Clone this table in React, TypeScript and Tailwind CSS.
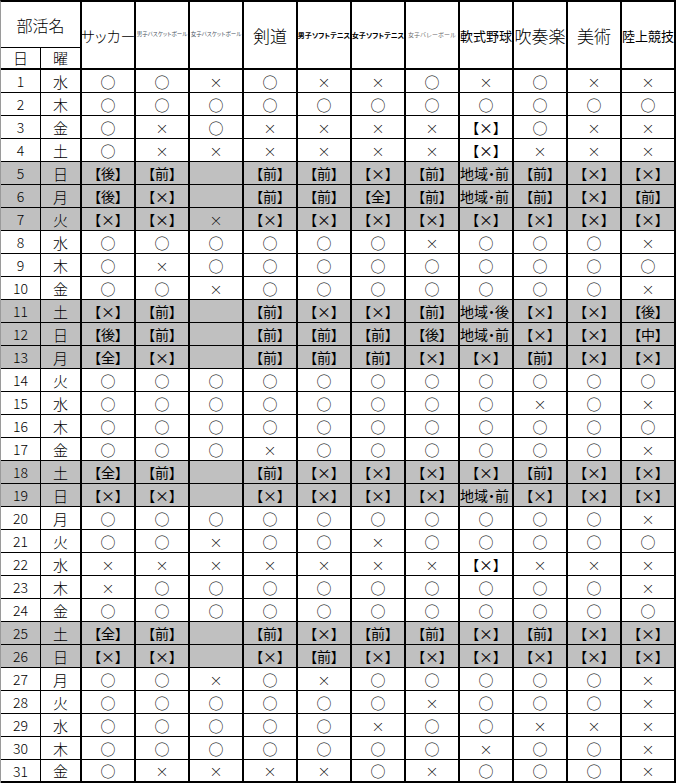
// 部活動 予定表 (月間)

const CLUBS = [
  { label: "サッカー", cls: "text-[15px] font-light [font-feature-settings:'palt']" },
  { label: "男子バスケットボール", cls: "text-[5.5px] text-[#4b5563] [font-feature-settings:'palt']" },
  { label: "女子バスケットボール", cls: "text-[5.5px] text-[#4b5563] [font-feature-settings:'palt']" },
  { label: "剣道", cls: "text-[17px] font-light" },
  { label: "男子ソフトテニス", cls: "text-[7px] font-bold [font-feature-settings:'palt']" },
  { label: "女子ソフトテニス", cls: "text-[7px] font-bold [font-feature-settings:'palt']" },
  { label: "女子バレーボール", cls: "text-[6px] text-[#6b6b6b]" },
  { label: "軟式野球", cls: "text-[13px]" },
  { label: "吹奏楽", cls: "text-[17px] font-light" },
  { label: "美術", cls: "text-[17px] font-light" },
  { label: "陸上競技", cls: "text-[13px]" },
];

// o = ○, x = ×, X = 【×】, 前/後/全/中 = 【前】 etc, _ = 空欄, 地前/地後 = 地域・前/後
const ROWS: [number, string, boolean, string[]][] = [
  [1, "水", false, ["o", "o", "x", "o", "x", "x", "o", "x", "o", "x", "x"]],
  [2, "木", false, ["o", "o", "o", "o", "o", "o", "o", "o", "o", "o", "o"]],
  [3, "金", false, ["o", "x", "o", "x", "x", "x", "x", "X", "o", "x", "x"]],
  [4, "土", false, ["o", "x", "x", "x", "x", "x", "x", "X", "x", "x", "x"]],
  [5, "日", true, ["後", "前", "_", "前", "前", "X", "前", "地前", "前", "X", "X"]],
  [6, "月", true, ["後", "X", "_", "前", "前", "全", "前", "地前", "前", "X", "前"]],
  [7, "火", true, ["X", "X", "x", "X", "X", "X", "X", "X", "X", "X", "X"]],
  [8, "水", false, ["o", "o", "o", "o", "o", "o", "x", "o", "o", "o", "x"]],
  [9, "木", false, ["o", "x", "o", "o", "o", "o", "o", "o", "o", "o", "o"]],
  [10, "金", false, ["o", "o", "x", "o", "o", "o", "o", "o", "o", "o", "x"]],
  [11, "土", true, ["X", "前", "_", "前", "X", "X", "前", "地後", "X", "X", "後"]],
  [12, "日", true, ["後", "前", "_", "前", "前", "前", "後", "地前", "X", "X", "中"]],
  [13, "月", true, ["全", "X", "_", "前", "前", "前", "X", "X", "前", "X", "X"]],
  [14, "火", false, ["o", "o", "o", "o", "o", "o", "o", "o", "o", "o", "o"]],
  [15, "水", false, ["o", "o", "o", "o", "o", "o", "o", "o", "x", "o", "x"]],
  [16, "木", false, ["o", "o", "o", "o", "o", "o", "o", "o", "o", "o", "o"]],
  [17, "金", false, ["o", "o", "o", "x", "o", "o", "o", "o", "o", "o", "x"]],
  [18, "土", true, ["全", "前", "_", "前", "X", "X", "X", "X", "前", "X", "X"]],
  [19, "日", true, ["X", "X", "_", "X", "X", "X", "X", "地前", "X", "X", "X"]],
  [20, "月", false, ["o", "o", "o", "o", "o", "o", "o", "o", "o", "o", "x"]],
  [21, "火", false, ["o", "o", "x", "o", "o", "x", "o", "o", "o", "o", "o"]],
  [22, "水", false, ["x", "x", "x", "x", "x", "x", "x", "X", "x", "x", "x"]],
  [23, "木", false, ["x", "o", "o", "o", "o", "o", "o", "o", "o", "o", "x"]],
  [24, "金", false, ["o", "o", "o", "o", "o", "o", "o", "o", "o", "o", "o"]],
  [25, "土", true, ["全", "前", "_", "前", "X", "前", "前", "X", "前", "X", "X"]],
  [26, "日", true, ["X", "X", "_", "X", "前", "X", "X", "X", "X", "X", "X"]],
  [27, "月", false, ["o", "o", "x", "o", "x", "o", "o", "o", "o", "o", "x"]],
  [28, "火", false, ["o", "o", "o", "o", "o", "o", "x", "o", "o", "o", "x"]],
  [29, "水", false, ["o", "o", "o", "o", "o", "x", "o", "o", "x", "x", "x"]],
  [30, "木", false, ["o", "o", "o", "o", "o", "o", "o", "x", "o", "o", "x"]],
  [31, "金", false, ["o", "x", "x", "x", "x", "o", "x", "o", "o", "o", "x"]],
];

function cellText(v: string) {
  if (v === "o") return "○";
  if (v === "x") return "×";
  if (v === "X") return "【×】";
  if (v === "_") return "";
  if (v === "地前") return "地域・前";
  if (v === "地後") return "地域・後";
  return `【${v}】`;
}

const COLS = "grid grid-cols-[40px_41px_repeat(11,54px)]";

export default function App() {
  return (
    <div
      className="w-[676px] bg-white text-black border-l border-l-[#9a9a9a] border-t-2 border-t-black"
      style={{ fontFamily: '"Noto Sans CJK JP", "Noto Sans", sans-serif' }}
    >
      {/* ── Header ─────────────────────────────── */}
      <div className={`${COLS} grid-rows-[46px_20px] border-b-2 border-black`}>
        <div className="col-span-2 flex items-center justify-center border-b border-r-2 border-black text-[16px] font-light">
          部活名
        </div>
        {CLUBS.map((c, i) => (
          <div
            key={c.label}
            className={`row-span-2 flex items-center justify-center overflow-hidden whitespace-nowrap leading-none border-r-2 border-black ${c.cls}`}
            style={{ gridColumnStart: i + 3, gridRowStart: 1 }}
          >
            {c.label}
          </div>
        ))}
        <div className="flex items-center justify-center border-r border-black text-[15px] font-light">日</div>
        <div className="flex items-center justify-center border-r-2 border-black text-[15px] font-light">曜</div>
      </div>

      {/* ── Days ───────────────────────────────── */}
      {ROWS.map(([day, wd, grey, vals], ri) => (
        <div
          key={day}
          className={`${COLS} h-[23px] ${ri === ROWS.length - 1 ? "border-b-2" : "border-b"} border-black ${
            grey ? "bg-[#c0c0c0]" : "bg-white"
          }`}
        >
          <div className="flex items-center justify-center border-r border-black text-[14px] font-light leading-none">
            {day}
          </div>
          <div className="flex items-center justify-center border-r-2 border-black text-[15px] font-light leading-none">
            {wd}
          </div>
          {vals.map((v, i) => (
            <div
              key={i}
              className={`flex items-center overflow-hidden whitespace-nowrap border-r-2 border-black leading-none [font-feature-settings:'palt'] ${
                v.startsWith("地") ? "justify-start text-[14px]" : "justify-center"
              } ${v === "x" ? "text-[13px] font-light" : v === "o" ? "text-[15px] font-light" : "text-[14px]"}`}
            >
              {cellText(v)}
            </div>
          ))}
        </div>
      ))}
    </div>
  );
}
